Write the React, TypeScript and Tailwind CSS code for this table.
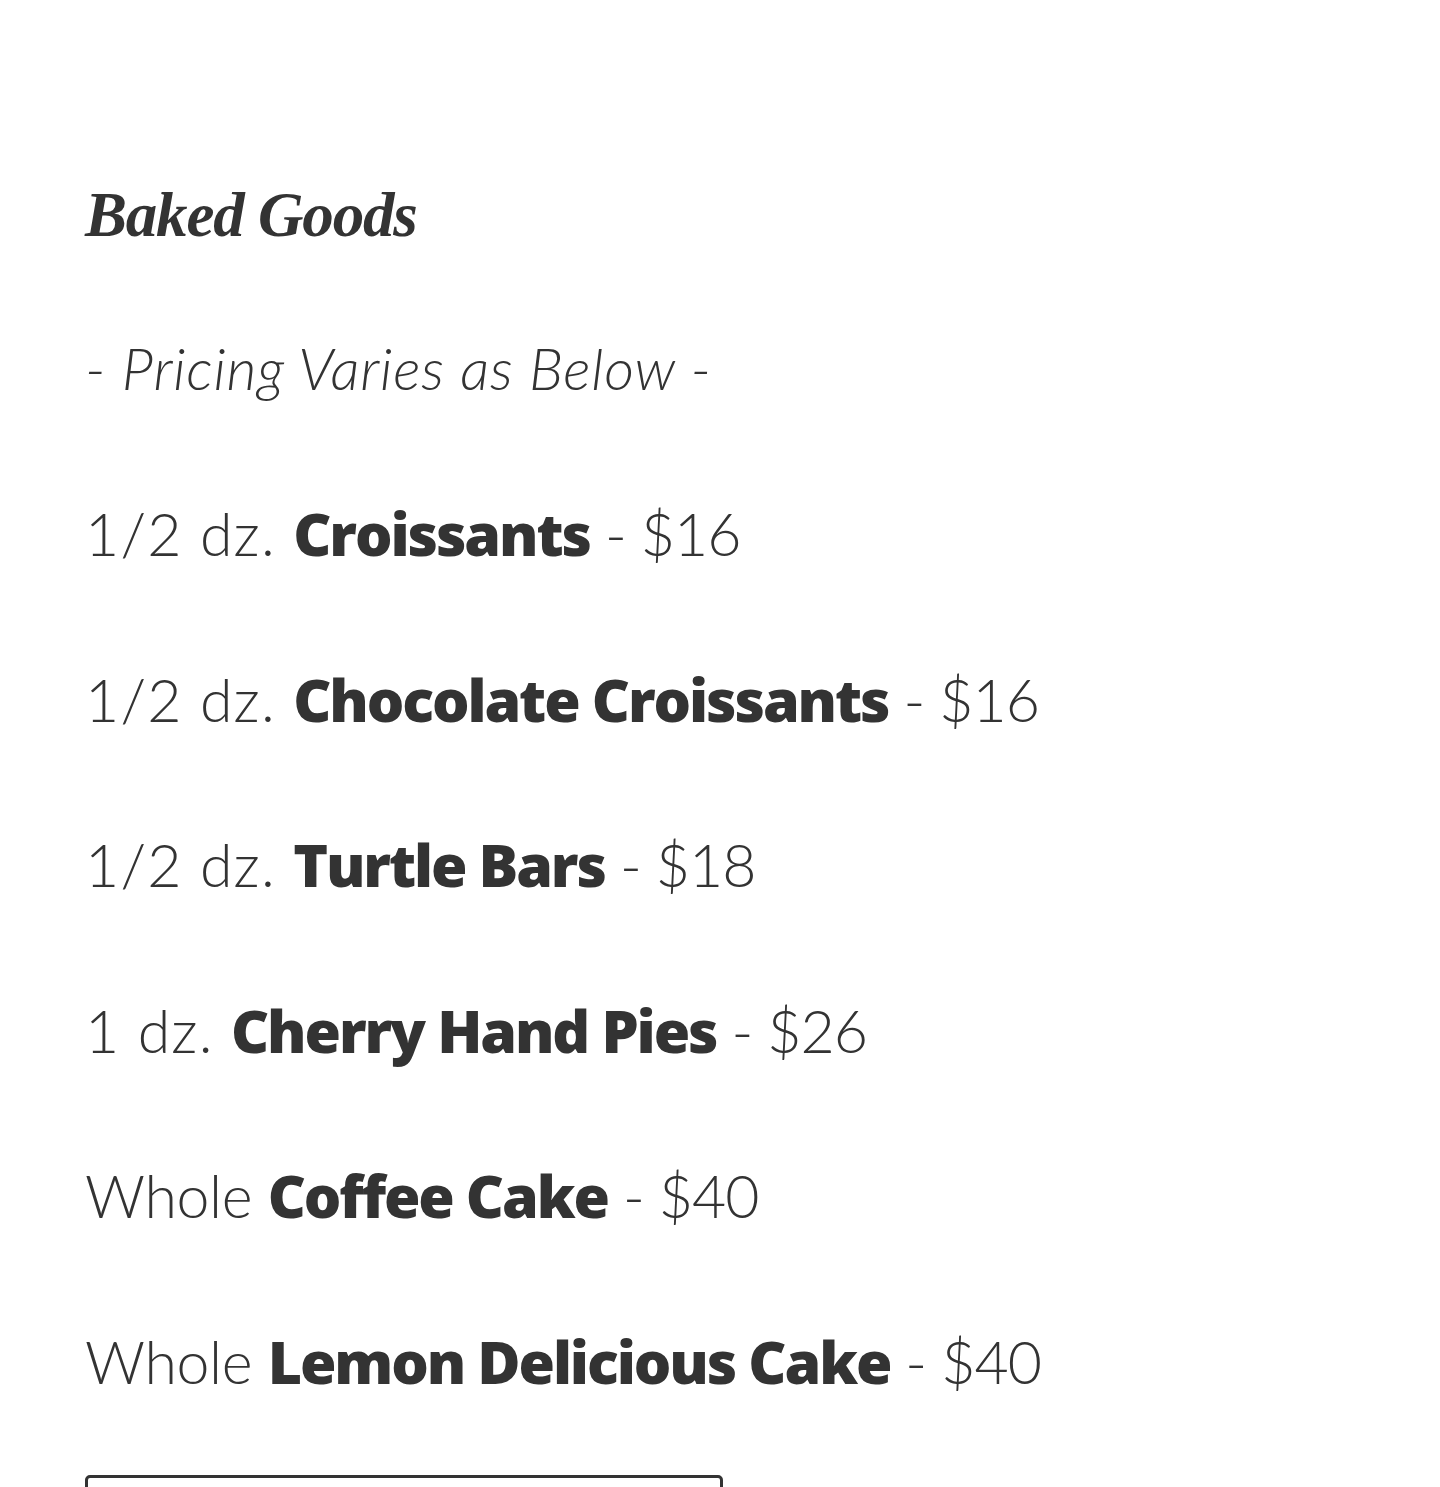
import React from "react";

const items: { pre: string; bold: string; price: string }[] = [
  { pre: "1/2 dz.", bold: "Croissants", price: "$16" },
  { pre: "1/2 dz.", bold: "Chocolate Croissants", price: "$16" },
  { pre: "1/2 dz.", bold: "Turtle Bars", price: "$18" },
  { pre: "1 dz.", bold: "Cherry Hand Pies", price: "$26" },
  { pre: "Whole", bold: "Coffee Cake", price: "$40" },
  { pre: "Whole", bold: "Lemon Delicious Cake", price: "$40" },
];

export default function App() {
  return (
    <div className="w-[1440px] h-[1487px] overflow-hidden bg-white text-[#333333]">
      <div className="pl-[85px] pt-[175px] flex flex-col">
        <h1 className="font-['Liberation_Serif',serif] italic font-bold text-[63px] leading-[80px] tracking-[-1.2px]">
          Baked Goods
        </h1>
        <p className="mt-[73px] font-['Lato',sans-serif] italic font-light text-[58px] leading-[80px] tracking-[0.8px]">
          - Pricing Varies as Below -
        </p>
        <div className="mt-[43px] flex flex-col font-['Lato',sans-serif] text-[59px]">
          {items.map((it, i) => (
            <p key={i} className="leading-[164.5px] font-light whitespace-nowrap">
              <span className={it.pre === "Whole" ? "tracking-[-0.4px]" : "tracking-[1.2px]"}>{it.pre} </span>
              <span className="font-['Open_Sans',sans-serif] font-extrabold tracking-[-2.1px]">{it.bold}</span>
              <span className="tracking-[-1px]"> - {it.price}</span>
            </p>
          ))}
        </div>
        <div className="mt-[31px] w-[638px] h-[40px] border-[3px] border-[#333333] rounded-[5px] shrink-0" />
      </div>
    </div>
  );
}
